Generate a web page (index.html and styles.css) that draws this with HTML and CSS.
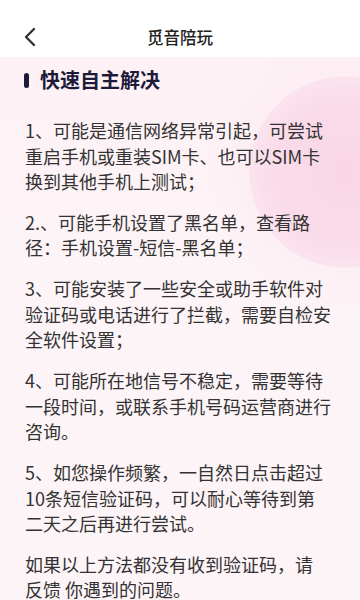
FILE: index.html
```html
<!DOCTYPE html>
<html lang="zh">
<head>
    <meta charset="UTF-8">
    <meta name="viewport" content="width=device-width, initial-scale=1.0">
    <title>觅音陪玩</title>
    <link rel="stylesheet" href="styles.css">
</head>
<body>
    <div class="topbar">
        <div class="navbar">
            <span class="back">
                <svg width="14" height="20" viewBox="0 0 14 20"><path d="M11 2 L3 10 L11 18" fill="none" stroke="#333" stroke-width="2.4" stroke-linecap="round" stroke-linejoin="round"/></svg>
            </span>
            <span class="navTitle">觅音陪玩</span>
        </div>
    </div>

    <div class="page">
        <h2 class="heading"><span class="mark"></span>快速自主解决</h2>

        <p class="tip">1、可能是通信网络异常引起，可尝试<br>重启手机或重装SIM卡、也可以SIM卡<br>换到其他手机上测试；</p>
        <p class="tip">2.、可能手机设置了黑名单，查看路<br>径：手机设置-短信-黑名单；</p>
        <p class="tip">3、可能安装了一些安全或助手软件对<br>验证码或电话进行了拦截，需要自检安<br>全软件设置；</p>
        <p class="tip">4、可能所在地信号不稳定，需要等待<br>一段时间，或联系手机号码运营商进行<br>咨询。</p>
        <p class="tip">5、如您操作频繁，一自然日点击超过<br>10条短信验证码，可以耐心等待到第<br>二天之后再进行尝试。</p>
        <p class="tip">如果以上方法都没有收到验证码，请<br>反馈 你遇到的问题。</p>
    </div>
</body>
</html>
```

FILE: styles.css
```css
html, body {
    margin: 0;
    padding: 0;
}
body {
    font-family: "Noto Sans CJK SC", "Noto Sans", sans-serif;
    background: #fdf4f7;
    width: 360px;
    height: 600px;
    overflow: hidden;
}
.topbar {
    background: #fff;
    height: 57px;
    padding-top: 19px;
    box-sizing: border-box;
}
.navbar {
    position: relative;
    height: 36px;
    display: flex;
    align-items: center;
    justify-content: center;
}
.back {
    position: absolute;
    left: 23px;
    top: 8px;
    display: flex;
}
.navTitle {
    font-size: 16.5px;
    font-weight: 500;
    color: #222;
}
.page {
    height: 543px;
    padding: 0 25px;
    box-sizing: border-box;
    background:
        radial-gradient(circle at 345px 115px, #f9d6e6 0, #fadbe9 70px, #fbe3ee 95px, rgba(252, 236, 243, 0.6) 96px, rgba(253, 244, 247, 0) 140px),
        linear-gradient(180deg, #fdf1f5 0, #fdf4f7 200px);
}
.heading {
    margin: 0;
    padding-top: 9px;
    display: flex;
    align-items: center;
    font-size: 20px;
    line-height: 28px;
    font-weight: 700;
    color: #1c1b38;
}
.mark {
    width: 5px;
    height: 15px;
    border-radius: 3px;
    background: #1c1b38;
    margin-right: 11px;
    margin-left: -1px;
}
.tip {
    margin: 0;
    margin-top: 15.4px;
    font-size: 18px;
    line-height: 25.5px;
    color: #333;
    white-space: nowrap;
}
.heading + .tip {
    margin-top: 24px;
}
```
